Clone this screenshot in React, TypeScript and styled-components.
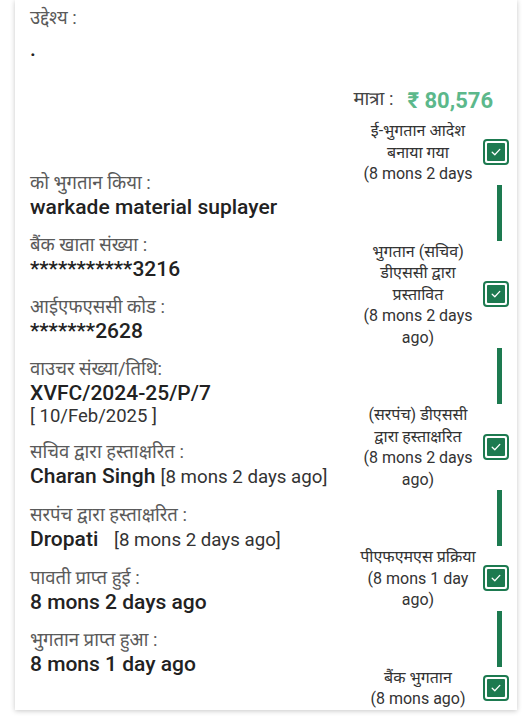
import React from "react";
import styled, { createGlobalStyle } from "styled-components";

const Global = createGlobalStyle`
  html, body { margin: 0; padding: 0; background: #ffffff; }
  body { font-family: Roboto, "Noto Sans Devanagari", "Noto Sans", sans-serif; }
`;

const Page = styled.div`
  padding: 0 15px 10px 15px;
  background: #ffffff;
`;

const Card = styled.div`
  background: #ffffff;
  box-shadow: 0 1px 5px rgba(0, 0, 0, 0.22);
  padding: 7px 8px 0 15px;
  height: 703px;
  overflow: hidden;
`;

const Label = styled.div`
  font-size: 18.5px;
  line-height: 22px;
  color: #5a5a5a;
`;

const Value = styled.div`
  font-size: 21px;
  line-height: 26px;
  font-weight: 500;
  color: #222222;
  white-space: pre;
`;

const Muted = styled.span`
  font-weight: 400;
  font-size: 18.7px;
  color: #333333;
`;

const DateLine = styled.div`
  font-size: 18.5px;
  line-height: 21px;
  color: #333333;
`;

const Purpose = styled.div`
  display: flex;
  flex-direction: column;
  gap: 7px;
`;

const AmountRow = styled.div`
  display: flex;
  justify-content: flex-end;
  align-items: center;
  gap: 14px;
  margin: 24px 16px 6px 0;
  height: 28px;
`;

const AmountLabel = styled.span`
  font-size: 18.5px;
  color: #444444;
`;

const Amount = styled.span`
  font-size: 22px;
  font-weight: 700;
  color: #5cb88b;
`;

const Main = styled.div`
  display: grid;
  grid-template-columns: 1fr auto;
`;

const Details = styled.div`
  display: flex;
  flex-direction: column;
  gap: 14px;
  padding-top: 52px;
`;

const Field = styled.div`
  display: flex;
  flex-direction: column;
`;

const Timeline = styled.div`
  display: flex;
  flex-direction: column;
`;

const Step = styled.div`
  display: flex;
  align-items: center;
  gap: 3px;
`;

const StepText = styled.div`
  width: 124px;
  text-align: center;
  font-size: 16px;
  line-height: 21.5px;
  color: #333333;
`;

const Check = styled.div`
  width: 26px;
  height: 26px;
  box-sizing: border-box;
  border: 2.5px solid #1d7a50;
  border-radius: 4px;
  padding: 2px;
  display: flex;
`;

const CheckFill = styled.div`
  flex: 1;
  background: #1d7a50;
  border-radius: 1px;
  display: flex;
  align-items: center;
  justify-content: center;
`;

const Bar = styled.div`
  width: 5px;
  height: 56px;
  background: #1d7a50;
  margin-left: 141px;
`;

const CheckIcon = () => (
  <svg width="12" height="12" viewBox="0 0 12 12">
    <polyline points="2.2,6.3 4.8,8.7 9.8,3.4" fill="none" stroke="#ffffff" strokeWidth="1.3" strokeLinecap="round" strokeLinejoin="round" />
  </svg>
);

const CheckBox = () => (
  <Check>
    <CheckFill>
      <CheckIcon />
    </CheckFill>
  </Check>
);

const steps: React.ReactNode[] = [
  <>ई-भुगतान आदेश<br />बनाया गया<br />(8 mons 2 days</>,
  <>भुगतान (सचिव)<br />डीएससी द्वारा<br />प्रस्तावित<br />(8 mons 2 days<br />ago)</>,
  <>(सरपंच) डीएससी<br />द्वारा हस्ताक्षरित<br />(8 mons 2 days<br />ago)</>,
  <>पीएफएमएस प्रक्रिया<br />(8 mons 1 day<br />ago)</>,
  <>बैंक भुगतान<br />(8 mons ago)</>,
];

export default function App() {
  return (
    <>
      <Global />
      <Page>
        <Card>
          <Purpose>
            <Label>उद्देश्य :</Label>
            <Value>.</Value>
          </Purpose>
          <AmountRow>
            <AmountLabel>मात्रा :</AmountLabel>
            <Amount>₹ 80,576</Amount>
          </AmountRow>
          <Main>
            <Details>
              <Field>
                <Label>को भुगतान किया :</Label>
                <Value>warkade material suplayer</Value>
              </Field>
              <Field>
                <Label>बैंक खाता संख्या :</Label>
                <Value>***********3216</Value>
              </Field>
              <Field>
                <Label>आईएफएससी कोड :</Label>
                <Value>*******2628</Value>
              </Field>
              <Field>
                <Label>वाउचर संख्या/तिथि:</Label>
                <Value>XVFC/2024-25/P/7</Value>
                <DateLine>[ 10/Feb/2025 ]</DateLine>
              </Field>
              <Field>
                <Label>सचिव द्वारा हस्ताक्षरित :</Label>
                <Value>Charan Singh <Muted>[8 mons 2 days ago]</Muted></Value>
              </Field>
              <Field>
                <Label>सरपंच द्वारा हस्ताक्षरित :</Label>
                <Value>Dropati   <Muted>[8 mons 2 days ago]</Muted></Value>
              </Field>
              <Field>
                <Label>पावती प्राप्त हुई :</Label>
                <Value>8 mons 2 days ago</Value>
              </Field>
              <Field>
                <Label>भुगतान प्राप्त हुआ :</Label>
                <Value>8 mons 1 day ago</Value>
              </Field>
            </Details>
            <Timeline>
              {steps.map((s, i) => (
                <React.Fragment key={i}>
                  {i > 0 && <Bar />}
                  <Step>
                    <StepText>{s}</StepText>
                    <CheckBox />
                  </Step>
                </React.Fragment>
              ))}
            </Timeline>
          </Main>
        </Card>
      </Page>
    </>
  );
}
